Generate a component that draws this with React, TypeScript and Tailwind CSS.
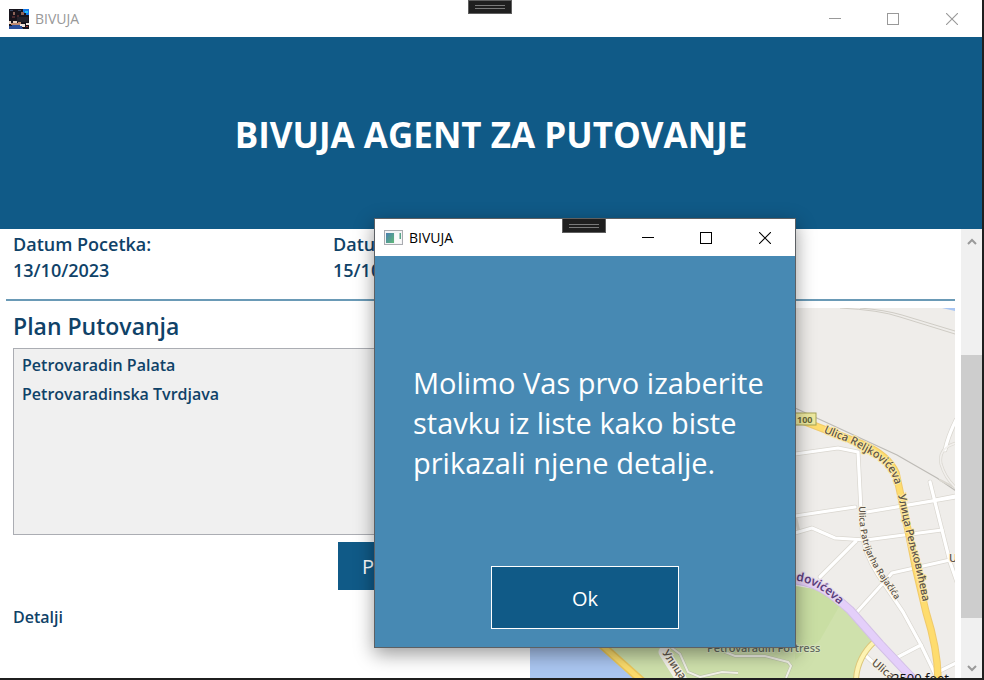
import React from "react";

const places = ["Petrovaradin Palata", "Petrovaradinska Tvrdjava"];

function WindowControls({ color }: { color: string }) {
  return (
    <div className={`flex h-9 ${color}`}>
      <button type="button" aria-label="Minimize" className="flex w-[58px] items-center justify-center">
        <svg width="12" height="12" viewBox="0 0 12 12" shapeRendering="crispEdges">
          <rect x="0" y="5" width="12" height="1" fill="currentColor" />
        </svg>
      </button>
      <button type="button" aria-label="Maximize" className="flex w-[58px] items-center justify-center">
        <svg width="12" height="12" viewBox="0 0 12 12" shapeRendering="crispEdges">
          <rect x="0.5" y="0.5" width="11" height="11" fill="none" stroke="currentColor" />
        </svg>
      </button>
      <button type="button" aria-label="Close" className="flex w-[60px] items-center justify-center">
        <svg width="12" height="12" viewBox="0 0 12 12">
          <path d="M0 0 L12 12 M12 0 L0 12" fill="none" stroke="currentColor" strokeWidth="1.1" />
        </svg>
      </button>
    </div>
  );
}

function GripTab({ place }: { place: string }) {
  return (
    <div className={`absolute flex w-11 flex-col items-center justify-center gap-0.5 border border-[#5f5f5f] bg-[#1f1f1f] ${place}`}>
      <div className="h-px w-[30px] bg-[#7a7a7a]" />
      <div className="h-px w-[30px] bg-[#7a7a7a]" />
    </div>
  );
}

function PhotoIcon() {
  return (
    <svg width="20" height="20" viewBox="0 0 20 20" shapeRendering="crispEdges">
      <rect width="20" height="20" fill="#17141c" />
      <path d="M14 0h6v6h-3V4h-3z" fill="#1478e8" />
      <path d="M16 2h3v2h-3z" fill="#27c3f2" />
      <path d="M1 1h3v1H1zM9 1h3v1H9z" fill="#3c4a63" />
      <path d="M4 3h2v3H4zM12 3h3v3h-3z" fill="#8d6459" />
      <path d="M3 7h3v2H3zM8 6h2v3H8z" fill="#4a282c" />
      <path d="M0 12h2v3H0zM4 12h4v3H4z" fill="#e8d2c4" />
      <path d="M2 14h8v2H2zM9 13h3v3H9z" fill="#c08a70" />
      <path d="M11 15h5v3h-5zM17 14h3v2h-3z" fill="#efe3dc" />
      <path d="M8 8h11v5H8z" fill="#24232b" />
      <path d="M0 17h3v-1h8v1h2v2h1v1H0z" fill="#2b4f9b" />
      <path d="M17 17h2v1h-2z" fill="#a83a34" />
    </svg>
  );
}

function AppIcon() {
  return (
    <svg width="19" height="16" viewBox="0 0 19 16">
      <defs>
        <linearGradient id="pane" x1="0" y1="0" x2="1" y2="1">
          <stop offset="0" stopColor="#4a7fb0" />
          <stop offset="1" stopColor="#5fb877" />
        </linearGradient>
      </defs>
      <rect x="0.5" y="0.5" width="18" height="14" fill="#f4f4f6" stroke="#a9abb0" />
      <rect x="2" y="3" width="8" height="10" fill="url(#pane)" />
      <rect x="11" y="3" width="6" height="10" fill="#fafafa" />
      <rect x="15.5" y="3" width="1.5" height="6" fill="#5aa58a" />
    </svg>
  );
}

function CityMap() {
  return (
    <svg
      className="block h-[370px] w-full"
      viewBox="530 308 425 370"
      preserveAspectRatio="xMaxYMin slice"
      fontFamily="'Noto Sans', 'Open Sans', sans-serif"
      role="img"
      aria-label="Petrovaradin"
    >
      <defs>
        <path id="reljLat" d="M823 432 C838 440 848 440 862 450 C880 459 888 467 893 478 L898 492" />
        <path id="reljCyr" d="M898 495 L907 537 L915 565 L925 612" />
        <path id="rajacica" d="M859 506 C859 540 866 556 880 577 L904 612" />
        <path id="radoviceva" d="M781 580 C808 579 823 588 848 613" />
        <path id="ulicaSouth" d="M871 664 L895 684" />
        <path id="ulicaWest" d="M662 653 L684 685" />
      </defs>
      <rect x="530" y="308" width="425" height="370" fill="#efedea" />
      <path d="M942 308 H955 V311Z" fill="#a9c6f3" />

      {/* park and river */}
      <path d="M530 560 L795 586 L822 590 L850 612 L873 641 L859 658 L855 678 H530Z" fill="#cfe1ac" />
      <path d="M795 586 L820 590 L840 605 L820 640 L795 660Z" fill="#c6dd9f" opacity="0.7" />
      <path d="M530 600 L590 640 L633 678 H530Z" fill="#aac6f1" />
      <g fill="none">
        <path d="M595 639 L642 681" stroke="#eac65a" strokeWidth="8" />
        <path d="M595 639 L642 681" stroke="#fbdc6c" strokeWidth="5" />
        <path d="M720 650 L735 656 L765 656 L788 662 L791 666 L786 678 M668 645 L680 654 L688 672 L700 677 L722 672 L738 673" stroke="#b9bfa8" strokeWidth="3" />
        <path d="M720 650 L735 656 L765 656 L788 662 L791 666 L786 678 M668 645 L680 654 L688 672 L700 677 L722 672 L738 673" stroke="#f1f1e6" strokeWidth="2" />
        <path d="M664 652 L688 690" stroke="#f4f1ec" strokeWidth="11" strokeLinecap="round" />
      </g>

      {/* railway */}
      <g fill="none" stroke="#cfccc5">
        <path d="M840 308 Q880 310 900 317 L955 334" strokeWidth="1" />
        <path d="M860 308 Q885 310 902 315 L955 331" strokeWidth="1" />
        <path d="M795 408 L897 455 L937 478 L956 491" stroke="#bdbbb6" strokeWidth="1.2" />
      </g>

      {/* side streets */}
      <g fill="none" strokeLinejoin="round" strokeLinecap="round">
        <g stroke="#dad7d0" strokeWidth="4.6">
          <path d="M795 454 L838 448 L858 452 L862 530 Q863 552 878 575 L903 612 L921 645 L936 676" />
          <path d="M956 420 Q948 436 945 450" />
          <path d="M956 443 Q938 448 941 464 Q945 478 956 488" strokeWidth="3" />
          <path d="M930 482 L942 530 L950 562 L957 582" />
          <path d="M935 500 L956 496" />
          <path d="M795 516 L855 507 M867 512 L956 497" />
          <path d="M795 533 L812 528 L835 538 L866 540 L942 530" />
          <path d="M856 541 L820 577" />
          <path d="M857 612 L885 581 L892 573 L950 560" />
          <path d="M898 657 L921 645 M866 656 L892 680 M936 673 L956 663" />
          <path d="M795 515 L799 532" strokeWidth="3" />
          <path d="M940 480 L956 488" strokeWidth="2" />
        </g>
        <g stroke="#ffffff" strokeWidth="3.2">
          <path d="M795 454 L838 448 L858 452 L862 530 Q863 552 878 575 L903 612 L921 645 L936 676" />
          <path d="M956 420 Q948 436 945 450" />
          <path d="M956 443 Q938 448 941 464 Q945 478 956 488" stroke="#f1efec" strokeWidth="1.6" />
          <path d="M930 482 L942 530 L950 562 L957 582" />
          <path d="M935 500 L956 496" />
          <path d="M795 516 L855 507 M867 512 L956 497" />
          <path d="M795 533 L812 528 L835 538 L866 540 L942 530" />
          <path d="M856 541 L820 577" />
          <path d="M857 612 L885 581 L892 573 L950 560" />
          <path d="M898 657 L921 645 M866 656 L892 680 M936 673 L956 663" />
        </g>
      </g>

      {/* main roads */}
      <g fill="none">
        <path d="M874 642 Q857 658 856 680" stroke="#dcc77b" strokeWidth="6" />
        <path d="M874 642 Q857 658 856 680" stroke="#fdf3b2" strokeWidth="4" />
        <path d="M785 579 C815 580 830 592 850 610 L880 644 L914 680" stroke="#d3c0e6" strokeWidth="9" />
        <path d="M785 579 C815 580 830 592 850 610 L880 644 L914 680" stroke="#e4cffa" strokeWidth="7" />
        <path d="M795 418 L826 430 L862 444 Q888 455 896 473 L905 515 L916 570 L926 612 Q938 650 938 680" stroke="#f0ca6c" strokeWidth="7.5" />
        <path d="M795 418 L826 430 L862 444 Q888 455 896 473 L905 515 L916 570 L926 612 Q938 650 938 680" stroke="#fedc6e" strokeWidth="5.5" />
      </g>
      <rect x="793" y="413" width="23" height="12" fill="#eeeaa0" stroke="#a5a255" />
      <text x="797" y="423" fontSize="9" fontWeight="700" fill="#68683c">100</text>

      {/* labels */}
      <g fill="#5b5248" stroke="#f6f1e4" strokeWidth="2" paintOrder="stroke" fontSize="11" fontWeight="500">
        <text stroke="#fbe7a0"><textPath href="#reljLat">Ulica Reljkovićeva</textPath></text>
        <text stroke="#fbe7a0"><textPath href="#reljCyr">Улица Рељковићева</textPath></text>
        <text fontSize="9"><textPath href="#rajacica">Ulica Patrijarha Rajačića</textPath></text>
        <text fontSize="12" fontWeight="600" fill="#5c3f7d" stroke="#e6d8ee"><textPath href="#radoviceva">Radovićeva</textPath></text>
        <text><textPath href="#ulicaSouth">Ulica</textPath></text>
        <text><textPath href="#ulicaWest">Улица</textPath></text>
        <text x="949" y="562">U</text>
        <text x="707" y="652" fontWeight="500" fill="#646b60" stroke="#d9e6bf">Petrovaradin Fortress</text>
      </g>
      <text x="892" y="683" fontSize="13" fill="#111111">2500 feet</text>
    </svg>
  );
}

function ScrollBar() {
  return (
    <div className="flex w-[21px] shrink-0 flex-col bg-[#f0f0f0] text-[#9a9a9a]">
      <button type="button" aria-label="Scroll up" className="flex h-5 items-center justify-center pt-1">
        <svg width="10" height="7" viewBox="0 0 10 7"><path d="M1 6 L5 2 L9 6" fill="none" stroke="currentColor" strokeWidth="2" /></svg>
      </button>
      <div className="flex flex-1 flex-col">
        <div className="grow-[106]" />
        <div className="grow-[263] bg-[#cdcdcd]" />
        <div className="grow-[40]" />
      </div>
      <button type="button" aria-label="Scroll down" className="flex h-5 items-center justify-center">
        <svg width="10" height="7" viewBox="0 0 10 7"><path d="M1 1 L5 5 L9 1" fill="none" stroke="currentColor" strokeWidth="2" /></svg>
      </button>
    </div>
  );
}

function MessageDialog() {
  return (
    <div
      role="dialog"
      aria-label="BIVUJA"
      className="absolute left-[374px] top-[218px] flex h-[430px] w-[422px] flex-col border border-[#5c6064] bg-[#4789b3] shadow-[0_6px_18px_rgba(0,0,0,0.4)]"
    >
      <div className="flex h-[37px] shrink-0 items-center justify-between bg-white pl-[9px]">
        <div className="flex items-center gap-1.5 text-sm text-black">
          <AppIcon />
          <span>BIVUJA</span>
        </div>
        <WindowControls color="text-black" />
      </div>
      <GripTab place="left-[187px] -top-px h-[15px]" />
      <p className="pt-[107px] pr-7 pl-[38px] text-[29px] leading-10 text-white">
        Molimo Vas prvo izaberite stavku iz liste kako biste prikazali njene detalje.
      </p>
      <button type="button" className="mx-auto mt-auto mb-[18px] h-[63px] w-[188px] border border-white bg-[#105a87] pt-0.5 text-xl text-white">
        Ok
      </button>
    </div>
  );
}

export default function App() {
  return (
    <div className="relative flex h-screen w-full flex-col overflow-hidden bg-[#1f1f1f] pr-0.5 pb-0.5 font-['Open_Sans','Noto_Sans',sans-serif]">
      <div className="flex h-[37px] shrink-0 items-center justify-between bg-white pl-[9px]">
        <div className="flex items-center gap-1.5 text-sm text-[#999999]">
          <PhotoIcon />
          <span>BIVUJA</span>
        </div>
        <WindowControls color="text-[#999999]" />
      </div>
      <GripTab place="left-[468px] top-0 h-3.5" />

      <header className="flex h-48 shrink-0 items-center justify-center bg-[#105a87] pt-1">
        <h1 className="text-[35px] font-bold text-white">BIVUJA AGENT ZA PUTOVANJE</h1>
      </header>

      <div className="flex min-h-0 flex-1 bg-white text-[#0f4268]">
        <main className="flex min-w-0 flex-1 flex-col overflow-hidden px-1.5">
          <dl className="grid grid-cols-[320px_320px_1fr] border-b-2 border-[#6a9ab6] pt-0.5 pb-4 pl-[7px] text-lg leading-[26px] font-semibold">
            <div>
              <dt>Datum Pocetka:</dt>
              <dd>13/10/2023</dd>
            </div>
            <div>
              <dt>Datum Kraja:</dt>
              <dd>15/10/2023</dd>
            </div>
          </dl>
          <div className="flex gap-3 pt-[7px] pl-[7px]">
            <section className="flex min-w-0 flex-1 flex-col">
              <h2 className="text-[23px] leading-9 font-semibold">Plan Putovanja</h2>
              <ul className="mt-1 h-[187px] border border-[#abadb3] bg-[#f0f0f0] pt-px">
                {places.map((place) => (
                  <li key={place}>
                    <button type="button" className="block h-[29px] w-full px-2 text-left text-base font-semibold">
                      {place}
                    </button>
                  </li>
                ))}
              </ul>
              <button type="button" className="mt-[7px] h-12 w-[180px] self-end bg-[#105a87] pt-0.5 text-xl text-white">
                Prikazi Detalje
              </button>
              <h3 className="mt-[15px] text-base leading-6 font-semibold">Detalji</h3>
            </section>
            <div className="w-[425px] shrink-0">
              <CityMap />
            </div>
          </div>
        </main>
        <ScrollBar />
      </div>
      <MessageDialog />
    </div>
  );
}
